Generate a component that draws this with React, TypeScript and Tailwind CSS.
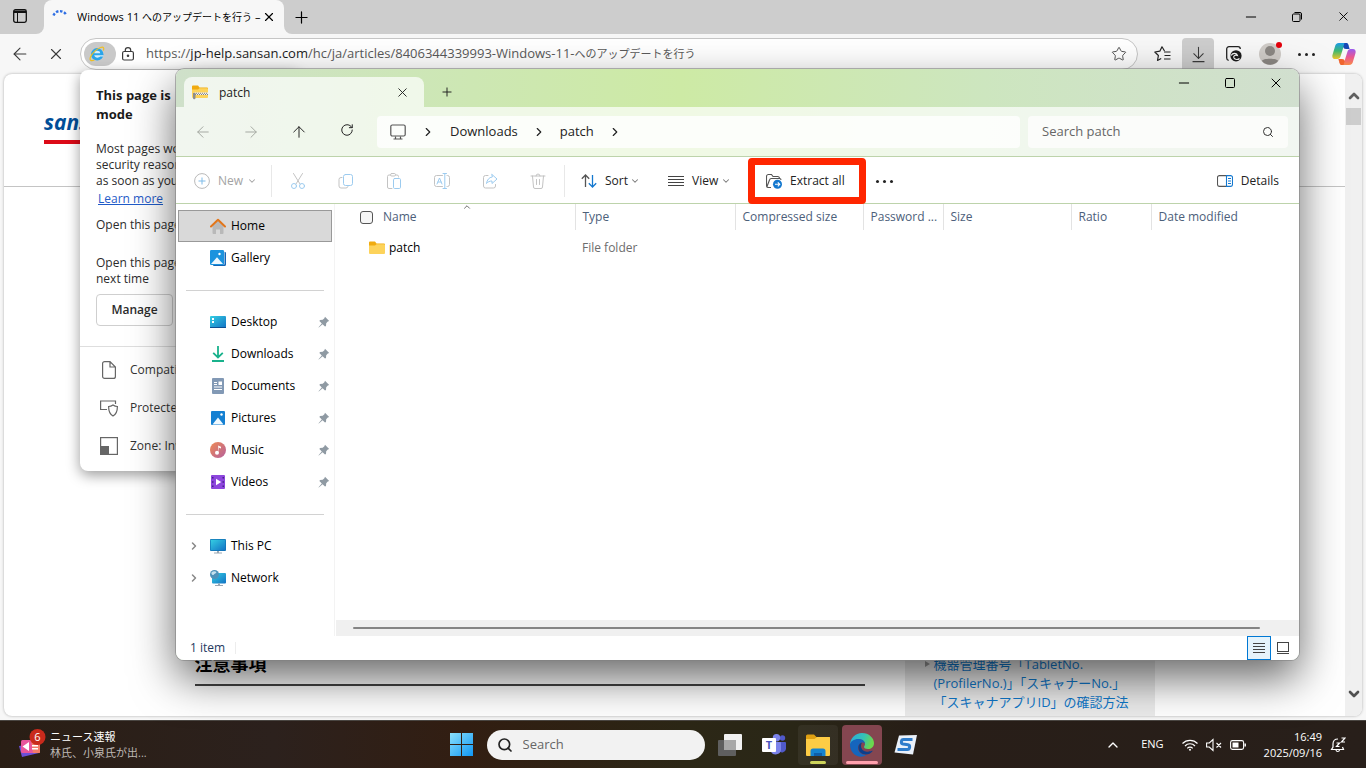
import type { ReactNode } from "react";
import {
  ArrowDownToLine,
  ArrowLeft,
  ArrowRight,
  ArrowUp,
  ChevronDown,
  ChevronRight,
  ChevronUp,
  Minus,
  Plus,
  RotateCw,
  Search,
  Square,
  Star,
  X,
} from "lucide-react";

const ICON = "h-4 w-4 shrink-0";

/* ---------- Explorer sidebar icons ---------- */

function HomeIcon() {
  return (
    <svg viewBox="0 0 16 16" className={ICON}>
      <path d="M2.5 7.5 8 2.5l5.5 5V15a1 1 0 0 1-1 1H10v-4.5H6V16H3.500a1 1 0 0 1-1-1z" fill="#b9b9b9" />
      <path d="m1 8.500 7-6.700 7 6.700" fill="none" stroke="#e2761b" strokeWidth="2" strokeLinecap="round" strokeLinejoin="round" />
    </svg>
  );
}

function GalleryIcon() {
  return (
    <svg viewBox="0 0 16 16" className={ICON}>
      <path d="M3 14.500h11.500V2H15a1 1 0 0 1 1 1v11.500a1.500 1.500 0 0 1-1.500 1.500H4a1 1 0 0 1-1-1z" fill="#1364b5" />
      <rect width="14" height="15" rx="1.2" fill="#1b93de" />
      <path d="M1 14 7 7.200 13 14z" fill="#eef8ff" />
      <circle cx="9.500" cy="4" r="1.200" fill="#fff" />
    </svg>
  );
}

function DesktopIcon() {
  return (
    <svg viewBox="0 0 16 16" className={ICON}>
      <defs>
        <linearGradient id="desk" x1="0" y1="0" x2="1" y2="1">
          <stop stopColor="#35cfe3" />
          <stop offset="1" stopColor="#1272c4" />
        </linearGradient>
      </defs>
      <rect y="2" width="16" height="12" rx="1" fill="url(#desk)" />
      <path d="M2 4h2v2H2zM2 7h2v2H2z" fill="#fff" />
      <path d="M0 13h16v.500a.5.500 0 0 1-.5.500H.500a.5.500 0 0 1-.5-.500z" fill="#0d4f91" />
    </svg>
  );
}

function DownloadsIcon() {
  return (
    <svg viewBox="0 0 16 16" className={ICON} fill="none" stroke="#19b28c" strokeWidth="1.800">
      <path d="M8 0v11M3.200 6.800 8 11.500l4.800-4.700M2 15h12" />
    </svg>
  );
}

function DocumentsIcon() {
  return (
    <svg viewBox="0 0 16 16" className={ICON}>
      <rect x="2" width="12" height="16" rx="1" fill="#8299b5" />
      <path d="M4 4h3v1H4zM4 6h3v1H4zM4 8.500h8v1H4zM4 11h8v1H4zM8.500 3.500H12V7H8.500z" fill="#fff" />
    </svg>
  );
}

function PicturesIcon() {
  return (
    <svg viewBox="0 0 16 16" className={ICON}>
      <rect x="1" y="1" width="14" height="14" rx="1" fill="#1580d2" />
      <path d="m2.500 14.500 5.500-7 5.500 7z" fill="#f2faff" />
      <circle cx="11.500" cy="4.500" r="1.200" fill="#fff" />
    </svg>
  );
}

function MusicIcon() {
  return (
    <svg viewBox="0 0 16 16" className={ICON}>
      <defs>
        <linearGradient id="music" x1="0" y1="0" x2="1" y2="1">
          <stop stopColor="#ef8a54" />
          <stop offset="1" stopColor="#b5609c" />
        </linearGradient>
      </defs>
      <circle cx="8" cy="8" r="8" fill="url(#music)" />
      <path d="M8 3.500 11 4.800V6.500L9 5.700v4.800" fill="#fff" />
      <circle cx="7" cy="10.700" r="2" fill="#fff" />
    </svg>
  );
}

function VideosIcon() {
  return (
    <svg viewBox="0 0 16 16" className={ICON}>
      <rect x="1" y="1" width="14" height="14" rx="1" fill="#8d46dd" />
      <path d="M2 3h1.500v1.500H2zM2 7.300h1.500v1.500H2zM2 11.500h1.500V13H2zM12.500 3H14v1.500h-1.500zM12.500 7.300H14v1.500h-1.500zM12.500 11.500H14V13h-1.500z" fill="#45208a" />
      <path d="m6 4.800 5.200 3.200L6 11.200z" fill="#fff" />
    </svg>
  );
}

function ThisPcIcon() {
  return (
    <svg viewBox="0 0 16 16" className={ICON}>
      <rect y="1" width="16" height="12" rx="1" fill="#1272b4" />
      <rect x=".7" y="1.700" width="14.600" height="10.600" rx=".5" fill="url(#desk)" />
      <path d="M7 13h2v1.500h3v1H4v-1h3z" fill="#9aa7b3" />
    </svg>
  );
}

function NetworkIcon() {
  return (
    <svg viewBox="0 0 16 16" className={ICON}>
      <rect x="2" y="3" width="14" height="10.500" rx="1" fill="url(#desk)" />
      <path d="M8 13.500h2V15h3v1H5v-1h3z" fill="#9aa7b3" />
      <circle cx="4.500" cy="4.500" r="4.500" fill="#4e92b9" />
      <path d="M1.500 2.500C3 1 5.500 1 6.500 2.200 5.500 4 4 3.500 3.500 5 2.500 5 1 4.500 1.500 2.500z" fill="#c6e2ee" />
    </svg>
  );
}

function FolderIcon({ zipped = false }: { zipped?: boolean }) {
  return (
    <svg viewBox="0 0 16 16" className={ICON}>
      <path d="M0 2.500A1 1 0 0 1 1 1.500h5l1.500 2H15a1 1 0 0 1 1 1V6H0z" fill="#f0ab10" />
      <path d="M0 5.500h6l1.500-1.300H15a1 1 0 0 1 1 1V13a1 1 0 0 1-1 1H1a1 1 0 0 1-1-1z" fill="#fdd35b" />
      {zipped && (
        <>
          <path d="M2 9.800h14" stroke="#eee" strokeWidth="2.500" />
          <path d="M2 9.300h14M3 10.500h13" stroke="#85827b" strokeWidth="1" strokeDasharray="1 1" />
          <path d="M1 9h2.500v5a1.200 1.200 0 0 1-2.500 0z" fill="#8d8d8d" />
        </>
      )}
    </svg>
  );
}

function PinIcon() {
  return (
    <svg viewBox="0 0 12 12" className="h-3 w-3 shrink-0">
      <path d="M7 .8 11.200 5l-1.400.6-1.600 1.700-.2 2.700-1 .6L4.600 8.200.8 11.500l-.3-.3L3.800 7.400 1.400 5l.6-1 2.700-.2L6.400 2.200z" fill="#8f9aa3" />
    </svg>
  );
}

/* ---------- Command bar icons ---------- */

function CommandIcon({ children }: { children: ReactNode }) {
  return (
    <svg viewBox="0 0 16 16" className={ICON} fill="none" stroke="#c3c3c3" strokeLinecap="round" strokeLinejoin="round">
      {children}
    </svg>
  );
}

const disabledCommands = [
  {
    label: "Cut",
    icon: (
      <>
        <path d="M3.500.5 10 11M12.500.5 6 11" />
        <circle cx="4" cy="13" r="2.500" stroke="#9ccbef" />
        <circle cx="12" cy="13" r="2.500" stroke="#9ccbef" />
      </>
    ),
  },
  {
    label: "Copy",
    icon: (
      <>
        <path d="M4 4.500H3a2 2 0 0 0-2 2V13a2 2 0 0 0 2 2h5a2 2 0 0 0 2-1.500" />
        <rect x="5.500" y="1.500" width="9" height="11" rx="2" stroke="#9ccbef" />
      </>
    ),
  },
  {
    label: "Paste",
    icon: (
      <>
        <path d="M4.500 2H3a1.500 1.500 0 0 0-1.500 1.500V14A1.500 1.500 0 0 0 3 15.500h3M9.500 2H11a1.500 1.500 0 0 1 1.500 1.500V4" />
        <rect x="4.500" y=".5" width="5" height="2.500" rx="1.200" />
        <rect x="7.500" y="5.500" width="7" height="10" rx="1.200" stroke="#9ccbef" />
      </>
    ),
  },
  {
    label: "Rename",
    icon: (
      <>
        <path d="M8.500 2.500H2.500a2 2 0 0 0-2 2v7a2 2 0 0 0 2 2h6M13 2.500h.5a2 2 0 0 1 2 2v7a2 2 0 0 1-2 2H13" />
        <path d="M10.800.5v15M9 .5h3.500M9 15.500h3.500M3 11l2.500-6L8 11M4 9h3" stroke="#9ccbef" />
      </>
    ),
  },
  {
    label: "Share",
    icon: (
      <>
        <path d="M6 2.500H3.500a2 2 0 0 0-2 2V13a2 2 0 0 0 2 2h8a2 2 0 0 0 2-2v-1.500" />
        <path d="M10 1.500 15 6l-5 4.500V8C7.500 8 6 8.800 4.500 10.500 5 7 7 4.300 10 4z" stroke="#9ccbef" />
      </>
    ),
  },
  {
    label: "Delete",
    icon: <path d="M1 3h14M6 3a2 2 0 0 1 4 0M2.500 3l1 11a1.500 1.500 0 0 0 1.500 1.500h6a1.500 1.500 0 0 0 1.500-1.500l1-11M6.500 6.500v5M9.500 6.500v5" />,
  },
];

const quickLinks = [
  { label: "Desktop", icon: <DesktopIcon /> },
  { label: "Downloads", icon: <DownloadsIcon /> },
  { label: "Documents", icon: <DocumentsIcon /> },
  { label: "Pictures", icon: <PicturesIcon /> },
  { label: "Music", icon: <MusicIcon /> },
  { label: "Videos", icon: <VideosIcon /> },
];

const columns = ["Type", "Compressed size", "Password ...", "Size", "Ratio", "Date modified"];

/* ---------- Browser ---------- */

function IeIcon() {
  return (
    <svg viewBox="0 0 16 16" className="h-4 w-4">
      <circle cx="8.200" cy="8.300" r="6.200" fill="#2aa5ea" />
      <path d="M5.200 7.200C5.600 4 11 4 11.200 7.200z" fill="#d5eefb" />
      <path d="M5.200 9.300h9.200l-.3 1.300h-3c-1.500 1.800-5.300 1.500-5.900-1.300z" fill="#d5eefb" />
      <path d="M14.300 4.500c1-2.500.2-4.200-2.700-3C8 2.700 3.300 7 1.600 10.800.2 14 1.800 15.700 5.400 14" fill="none" stroke="#f0c022" strokeWidth="1.200" />
    </svg>
  );
}

function TabActionsIcon() {
  return (
    <svg viewBox="0 0 14 14" className="h-[14px] w-[14px]">
      <rect x=".7" y=".7" width="12.600" height="12.600" rx="1.800" fill="none" stroke="#111" strokeWidth="1.300" />
      <path d="M1 1.500h12V4H1zM4 4h1v9H4z" fill="#111" />
    </svg>
  );
}

function TabStrip() {
  return (
    <div className="flex h-[34px] text-black">
      <div className="w-11 rounded-br-lg bg-[#cdcdcd]">
        <button aria-label="Tab actions" className="flex h-8 w-10 items-center justify-center">
          <TabActionsIcon />
        </button>
      </div>
      <div className="w-60 bg-[#cdcdcd]">
        <div className="flex h-[34px] items-center rounded-t-lg bg-[#f7f7f7] pr-2 pl-2">
          <svg viewBox="0 0 16 16" className={ICON}>
            <path d="M1.500 6.500A7 7 0 0 1 14.500 6.500" fill="none" stroke="#2f6fe4" strokeWidth="2.400" strokeDasharray="2.500 1.600" />
          </svg>
          <span className="ml-[9px] flex-1 overflow-hidden text-[11px] whitespace-nowrap">
            Windows 11 <span className="text-[10px]">へのアップデートを行う</span> –
          </span>
          <button aria-label="Close tab">
            <X className="h-[14px] w-[14px]" strokeWidth={2} />
          </button>
        </div>
      </div>
      <div className="flex flex-1 items-center justify-between rounded-bl-lg bg-[#cdcdcd]">
        <button aria-label="New tab" className="ml-2">
          <Plus className="h-[19px] w-[19px]" strokeWidth={1.5} />
        </button>
        <div className="flex">
          <button aria-label="Minimize browser" className="flex w-[46px] justify-center">
            <Minus className="h-4 w-4" strokeWidth={1.5} />
          </button>
          <button aria-label="Restore browser" className="flex w-[46px] items-center justify-center">
            <svg viewBox="0 0 10 10" className="h-[10px] w-[10px]" fill="none" stroke="#000">
              <rect x=".5" y="2" width="7.500" height="7.500" rx="1" />
              <path d="M2.500.5H8A1.500 1.500 0 0 1 9.500 2v5.500" />
            </svg>
          </button>
          <button aria-label="Close browser" className="flex w-[46px] justify-center">
            <X className="h-[15px] w-[15px]" strokeWidth={1.500} />
          </button>
        </div>
      </div>
    </div>
  );
}

function CopilotIcon() {
  return (
    <svg viewBox="0 0 24 22" className="h-[22px] w-6">
      <defs>
        <linearGradient id="cpA" x1="0" y1="0" x2="0" y2="1">
          <stop stopColor="#1b9ae8" />
          <stop offset=".5" stopColor="#3fb86f" />
          <stop offset="1" stopColor="#f0c52a" />
        </linearGradient>
        <linearGradient id="cpB" x1="0" y1="0" x2="0" y2="1">
          <stop stopColor="#9a5cf0" />
          <stop offset=".5" stopColor="#ea5791" />
          <stop offset="1" stopColor="#f88a48" />
        </linearGradient>
      </defs>
      <path d="M16 1.500C15.500.5 14.800 0 13.500 0H7C4.500 0 3.500 1.500 3 3.500L.6 11.500C-.2 14 .8 16 3 16h2.500c1.500 0 2.500-1 3-2.500l2.500-8C11.500 4 12.500 3 14 3h2.500z" fill="url(#cpA)" />
      <path d="M12.500 0h1.700c1.200 0 1.800.6 2.200 1.800L17.600 6H14c-1.700 0-2.600-.8-2.500-2.500z" fill="#1747b5" />
      <path d="M8 20.500c.5 1 1.200 1.500 2.500 1.500H17c2.500 0 3.500-1.500 4-3.500l2.400-8C24.200 8 23.200 6 21 6h-2.500c-1.500 0-2.500 1-3 2.500l-2.500 8C12.500 18 11.500 19 10 19H7.500z" fill="url(#cpB)" />
      <path d="M11.500 22H9.800c-1.200 0-1.800-.6-2.200-1.800L6.400 16H10c1.700 0 2.600.8 2.500 2.500z" fill="#f0652f" />
    </svg>
  );
}

function BrowserToolbar() {
  return (
    <div className="flex h-10 items-center text-[#3a3a3a]">
      <button aria-label="Back" className="ml-2.5 flex w-5 justify-center">
        <ArrowLeft className="h-5 w-5 shrink-0" strokeWidth={1.300} />
      </button>
      <button aria-label="Stop" className="ml-4 flex w-5 justify-center">
        <X className="h-[18px] w-[18px] shrink-0" strokeWidth={1.500} />
      </button>
      <div className="ml-[14px] flex h-8 flex-1 items-center rounded-full border border-[#c6c6c6] bg-white">
        <button aria-label="Internet Explorer mode" className="ml-[3px] flex h-6 w-8 items-center rounded-full bg-[#c9c9c9] pl-[5px]">
          <IeIcon />
        </button>
        <svg viewBox="0 0 12 14" className="ml-1.5 h-[14px] w-3" fill="none" stroke="#3a3a3a" strokeWidth="1.200">
          <rect x=".6" y="4.500" width="10.800" height="8.500" rx="1.500" />
          <path d="M3.300 4.500V3.300a2.700 2.700 0 0 1 5.400 0v1.200" />
          <circle cx="6" cy="8.800" r=".7" fill="#3a3a3a" />
        </svg>
        <div aria-label="Address" className="ml-3 flex-1 overflow-hidden text-[13px] whitespace-nowrap">
          <span className="text-[#5a5a5a]">https://</span>
          <span className="text-[#1b1b1b]">jp-help.sansan.com</span>
          <span className="text-[#5a5a5a]">
            /hc/ja/articles/8406344339993-Windows-11-<span className="text-[11px]">へのアップデートを行う</span>
          </span>
        </div>
        <Star className="mr-2.5 h-4 w-4 text-[#555]" strokeWidth={1.500} />
      </div>
      <div className="mr-[10px] ml-4 flex items-center">
        <button aria-label="Favorites" className="flex w-4 justify-center">
          <svg viewBox="0 0 17 16" className="h-4 w-[17px] shrink-0" fill="none" stroke="#222" strokeWidth="1.200" strokeLinejoin="round">
            <path d="M10.500 5 8 .8 5.800 5.200.8 6l3.600 3.500-.9 5 3.700-2M10 6h6.500M10.500 9.500h6M10 13h6.500" />
          </svg>
        </button>
        <button aria-label="Downloads" className="ml-3 flex h-8 w-8 items-center justify-center rounded-t bg-[#cdcdcd]">
          <ArrowDownToLine className="h-[19px] w-[19px]" strokeWidth={1.300} />
        </button>
        <button aria-label="Browser essentials" className="ml-3 flex w-4 justify-center">
          <svg viewBox="0 0 16 16" className="h-4 w-4" fill="none">
            <path d="M.7 12V3A2.300 2.300 0 0 1 3 .7h9A2.300 2.300 0 0 1 14.300 3M.7 12a2.300 2.300 0 0 0 2 2.300" stroke="#222" strokeWidth="1.300" />
            <circle cx="10" cy="9.800" r="5.600" fill="#1c1c1c" />
            <path d="M5 9.500c2-3 6-2.500 6.500 0-2.500-1-4.500.5-3.500 2.500 1 1.800 4 2 5.500.5" stroke="#f7f7f7" strokeWidth="1.200" />
          </svg>
        </button>
        <button aria-label="Profile" className="relative ml-4 h-6 w-6">
          <svg viewBox="0 0 24 24" className="h-6 w-6">
            <circle cx="12" cy="12" r="11" fill="#cfcbc7" />
            <circle cx="12" cy="9" r="5" fill="#8b8783" />
            <path d="M4 19c0-3 16-3 16 0-4 5-12 5-16 0z" fill="#8b8783" />
          </svg>
          <span className="absolute top-0 right-0 h-1.5 w-1.5 rounded-full bg-[#e3000b]" />
        </button>
        <button aria-label="Settings and more" className="ml-4 flex gap-1">
          <span className="h-[3px] w-[3px] rounded-full bg-[#222]" />
          <span className="h-[3px] w-[3px] rounded-full bg-[#222]" />
          <span className="h-[3px] w-[3px] rounded-full bg-[#222]" />
        </button>
        <button aria-label="Copilot" className="ml-[17px]">
          <CopilotIcon />
        </button>
      </div>
    </div>
  );
}

function WebPage() {
  return (
    <div className="mr-1 mb-1 ml-1 flex min-h-0 flex-1 overflow-hidden rounded-lg bg-white shadow-[0_0_3px_rgba(0,0,0,0.3)]">
      <main className="flex min-w-0 flex-1 flex-col">
        <header className="flex h-[113px] items-center border-b border-[#c4c4c4] px-10">
          <a href="#" className="-mt-2 w-[84px] border-b-4 border-[#dc0a17] pb-1 text-[21px] leading-7 font-bold text-[#004e98] italic">
            sans
          </a>
        </header>
        <div className="mx-auto flex w-full max-w-[960px] flex-1 justify-between">
          <section className="flex w-[670px] flex-col justify-end pb-[30px]">
            <h2 className="border-b-2 border-[#444] pb-2 text-lg leading-6 font-bold text-black">注意事項</h2>
          </section>
          <aside className="flex w-[250px] flex-col justify-end bg-[#ebebeb] px-5 pb-1">
            <a href="#" className="flex gap-1 text-[13px] leading-[19px] whitespace-nowrap text-[#0f77c9]">
              <span className="mt-1.5 h-0 w-0 shrink-0 border-y-[3px] border-l-[5px] border-y-transparent border-l-[#999]" />
              <span>
                機器管理番号「TabletNo.
                <br />
                (ProfilerNo.)」「スキャナーNo.」
                <br />
                「スキャナアプリID」の確認方法
              </span>
            </a>
          </aside>
        </div>
      </main>
      <div className="flex w-[17px] flex-col items-center bg-[#f0f0f0] py-[14px]">
        <ChevronUp className="h-4 w-4 text-[#606060]" strokeWidth={4} />
        <div className="mt-1 h-[17px] w-[15px] bg-[#cdcdcd]" />
        <ChevronDown className="mt-auto h-4 w-4 text-[#505050]" strokeWidth={4} />
      </div>
    </div>
  );
}

function IeModePopup() {
  return (
    <div className="absolute top-[70px] left-20 w-[220px] rounded-lg bg-white text-xs leading-4 whitespace-nowrap text-[#2b2b2b] shadow-[0_4px_14px_rgba(0,0,0,0.4)]">
      <div className="px-4 pt-4">
        <h2 className="text-[13px] leading-[19px] font-bold text-[#1b1b1b]">
          This page is
          <br />
          mode
        </h2>
        <p className="mt-[17px]">
          Most pages wo
          <br />
          security reason
          <br />
          as soon as you'
        </p>
        <a href="#" className="ml-0.5 block leading-5 text-[#1f5bc8] underline">
          Learn more
        </a>
        <p className="mt-2">Open this page</p>
        <p className="mt-[22px]">
          Open this page
          <br />
          next time
        </p>
        <button className="mt-[7px] h-8 w-[77px] rounded border border-[#cfcfcf] font-semibold">Manage</button>
      </div>
      <ul className="mt-5 border-t border-[#dedede] pt-1 pb-1.5 text-[#333]">
        <li className="flex h-[38px] items-center gap-3 pl-5">
          <svg viewBox="0 0 18 18" className="h-[18px] w-[18px]" fill="none" stroke="#666" strokeWidth="1.200">
            <path d="M2.600 2.600A2 2 0 0 1 4.600.6H10l5.400 5.400v9.400a2 2 0 0 1-2 2H4.600a2 2 0 0 1-2-2zM10 .6V6h5.400" />
          </svg>
          Compati
        </li>
        <li className="flex h-[38px] items-center gap-3 pl-5">
          <svg viewBox="0 0 18 18" className="h-[18px] w-[18px]" fill="none" stroke="#666" strokeWidth="1.200">
            <path d="M15.500 5V2H.6v8.500H7M8.600 7.500c2 0 3.200-.6 4.400-1.500 1.200.9 2.400 1.500 4.400 1.500 0 4.500-.6 7.500-4.400 9.500-3.800-2-4.400-5-4.400-9.500z" />
          </svg>
          Protected
        </li>
        <li className="flex h-[38px] items-center gap-3 pl-5">
          <svg viewBox="0 0 18 18" className="h-[18px] w-[18px]">
            <rect x=".6" y=".6" width="16.800" height="16.800" fill="none" stroke="#666" strokeWidth="1.200" />
            <path d="M0 9h9v9H0z" fill="#666" />
          </svg>
          Zone: Inv
        </li>
      </ul>
    </div>
  );
}

/* ---------- File Explorer window ---------- */

function ExplorerTitleBar() {
  return (
    <div className="flex h-[38px] justify-between text-[#222]">
      <div className="flex items-end">
        <div className="ml-2 flex h-[30px] w-60 items-center rounded-t-lg bg-white/70 px-2">
          <FolderIcon zipped />
          <span className="ml-[11px] flex-1 pt-0.5 text-xs font-medium">patch</span>
          <button aria-label="Close patch tab" className="mr-1.5">
            <X className="h-[15px] w-[15px]" strokeWidth={1.500} />
          </button>
        </div>
        <button aria-label="New folder tab" className="mb-2 ml-4">
          <Plus className="h-[14px] w-[14px]" strokeWidth={1.700} />
        </button>
      </div>
      <div className="flex h-7 items-center text-black">
        <button aria-label="Minimize" className="flex w-[46px] justify-center">
          <Minus className="h-4 w-4" strokeWidth={1.500} />
        </button>
        <button aria-label="Maximize" className="flex w-[46px] justify-center">
          <Square className="h-3 w-3" strokeWidth={2} />
        </button>
        <button aria-label="Close" className="flex w-[46px] justify-center">
          <X className="h-4 w-4" strokeWidth={1.500} />
        </button>
      </div>
    </div>
  );
}

function ExplorerNav() {
  return (
    <div className="flex h-[50px] items-center border-b border-[#bdd3ab] bg-white/70 text-[#222]">
      <div className="flex w-[201px] pl-[3px]">
        <button aria-label="Go back" className="flex w-12 justify-center text-[#a3a8a0]">
          <ArrowLeft className="h-[18px] w-[18px]" strokeWidth={1.300} />
        </button>
        <button aria-label="Go forward" className="flex w-12 justify-center text-[#a3a8a0]">
          <ArrowRight className="h-[18px] w-[18px]" strokeWidth={1.300} />
        </button>
        <button aria-label="Up" className="flex w-12 justify-center">
          <ArrowUp className="h-[18px] w-[18px]" strokeWidth={1.300} />
        </button>
        <button aria-label="Refresh" className="flex w-12 justify-center">
          <RotateCw className="h-[14px] w-[14px]" strokeWidth={1.700} />
        </button>
      </div>
      <nav aria-label="Path" className="flex h-8 flex-1 items-center rounded bg-white/80 pl-[13px] text-[13px]">
        <svg viewBox="0 0 16 16" className={ICON} fill="none" stroke="#555" strokeWidth="1.200">
          <rect x=".8" y="1" width="14.400" height="11" rx="1.500" />
          <path d="M5.500 12.500v2.200M10.500 12.500v2.200M3.500 15h9" />
        </svg>
        <ChevronRight className="ml-[15px] h-[14px] w-[14px]" strokeWidth={2} />
        <button className="ml-[15px]">Downloads</button>
        <ChevronRight className="ml-3.5 h-[14px] w-[14px]" strokeWidth={2} />
        <button className="ml-3.5">patch</button>
        <ChevronRight className="ml-3.5 h-[14px] w-[14px]" strokeWidth={2} />
      </nav>
      <label className="mr-[11px] ml-2 flex h-8 w-[260px] items-center rounded bg-[#fbfcfa] px-3.5 text-[13px]">
        <input type="text" aria-label="Search patch" placeholder="Search patch" className="min-w-0 flex-1 outline-none placeholder:text-[#666]" />
        <Search className="h-3 w-3 text-[#333]" strokeWidth={2} />
      </label>
    </div>
  );
}

function CommandBar() {
  return (
    <div className="flex h-[47px] items-center border-b border-[#bdd3ab] bg-white pt-0.5 text-xs text-[#222]">
      <button disabled className="ml-[18px] flex w-[77px] items-center text-[#a3a3a3]">
        <svg viewBox="0 0 16 16" className={ICON} fill="none" stroke="#b9b9b9">
          <circle cx="8" cy="8" r="7.400" />
          <path d="M8 4.500v7M4.500 8h7" stroke="#7fbbe8" />
        </svg>
        <span className="ml-2">New</span>
        <ChevronDown className="ml-1 h-2.5 w-2.5" strokeWidth={2.500} />
      </button>
      <div className="mr-0.5 h-8 w-px bg-[#e8e8e8]" />
      {disabledCommands.map((c) => (
        <button key={c.label} disabled aria-label={c.label} className="flex w-12 justify-center">
          <CommandIcon>{c.icon}</CommandIcon>
        </button>
      ))}
      <div className="ml-0.5 h-8 w-px bg-[#e8e8e8]" />
      <button className="ml-4 flex w-[59px] items-center">
        <svg viewBox="0 0 16 14" className="h-[14px] w-4 shrink-0" fill="none" strokeWidth="1.300">
          <path d="M4.500 13V1M.8 4.700 4.500 1l3.700 3.700" stroke="#555" />
          <path d="M11.500 1v12M7.800 9.300l3.700 3.700 3.700-3.700" stroke="#1478cf" />
        </svg>
        <span className="ml-2 flex-1 text-left">Sort</span>
        <ChevronDown className="h-2.5 w-2.5 text-[#777]" strokeWidth={2.500} />
      </button>
      <button className="ml-7 flex w-[63px] items-center">
        <span className="flex w-4 flex-col gap-[2px]">
          <span className="h-px bg-[#444]" />
          <span className="h-px bg-[#444]" />
          <span className="h-px bg-[#444]" />
          <span className="h-px bg-[#444]" />
        </span>
        <span className="ml-2 flex-1 text-left">View</span>
        <ChevronDown className="h-2.5 w-2.5 text-[#777]" strokeWidth={2.500} />
      </button>
      <div className="ml-[17px] h-[46px] w-[118px] rounded-sm border-[7px] border-[#ff2600]">
        <button className="flex h-full w-full items-center pl-[11px] whitespace-nowrap">
          <svg viewBox="0 0 16 16" className={ICON} fill="none">
            <path d="M5 14.500H2.500a2 2 0 0 1-2-2V3.500a2 2 0 0 1 2-2h3l1.500 2h4.500a2 2 0 0 1 2 2M1 13.500 3.500 7a2 2 0 0 1 1.800-1.500h8.200a1.500 1.500 0 0 1 1.500 1.500" stroke="#555" strokeWidth="1.100" />
            <circle cx="11.500" cy="11.300" r="4.500" fill="#1478cf" />
            <path d="M9 11.300h4.500M11.800 9.300l2 2-2 2" stroke="#fff" strokeWidth="1.100" />
          </svg>
          <span className="ml-2">Extract all</span>
        </button>
      </div>
      <button aria-label="See more" className="ml-2.5 flex gap-1">
        <span className="h-[3px] w-[3px] rounded-full bg-[#222]" />
        <span className="h-[3px] w-[3px] rounded-full bg-[#222]" />
        <span className="h-[3px] w-[3px] rounded-full bg-[#222]" />
      </button>
      <button className="mr-5 ml-auto flex items-center gap-2">
        <svg viewBox="0 0 16 12" className="h-3 w-4" fill="none">
          <path d="M9.500.6H2.500a2 2 0 0 0-2 2v6.800a2 2 0 0 0 2 2h7" stroke="#555" strokeWidth="1.100" />
          <path d="M9.500.6h4a2 2 0 0 1 2 2v6.800a2 2 0 0 1-2 2h-4zM11 3.500h3M11 6h3M11 8.500h3" stroke="#1478cf" strokeWidth="1.100" />
        </svg>
        Details
      </button>
    </div>
  );
}

type SideItemProps = {
  icon: ReactNode;
  label: string;
  pinned?: boolean;
  expandable?: boolean;
  active?: boolean;
};

function SideItem({ icon, label, pinned, expandable, active }: SideItemProps) {
  return (
    <a
      href="#"
      className={
        active
          ? "flex h-8 items-center border border-[#999] bg-[#d9d9d9] pl-[9px]"
          : "flex h-8 items-center pr-[2px] pl-2.5"
      }
    >
      <span className="flex w-[22px] shrink-0">
        {expandable && <ChevronRight className="h-3 w-3 text-[#888]" strokeWidth={3} />}
      </span>
      {icon}
      <span className="ml-[5px] flex-1">{label}</span>
      {pinned && <PinIcon />}
    </a>
  );
}

function Sidebar() {
  return (
    <nav aria-label="Folders" className="w-[159px] shrink-0 border-r border-[#f3f3f3] pt-1.5 pr-[2px] pl-[2px] text-xs text-black">
      <SideItem icon={<HomeIcon />} label="Home" active />
      <SideItem icon={<GalleryIcon />} label="Gallery" />
      <hr className="mx-2 mt-4 -mb-px h-0 border-[#d2d2d2]" />
      <div className="pt-4">
        {quickLinks.map((q) => (
          <SideItem key={q.label} icon={q.icon} label={q.label} pinned />
        ))}
      </div>
      <hr className="mx-2 mt-4 -mb-px h-0 border-[#d2d2d2]" />
      <div className="pt-4">
        <SideItem icon={<ThisPcIcon />} label="This PC" expandable />
        <SideItem icon={<NetworkIcon />} label="Network" expandable />
      </div>
    </nav>
  );
}

function FileTable() {
  return (
    <table className="w-full table-fixed text-left text-xs">
      <colgroup>
        <col className="w-60" />
        <col className="w-40" />
        <col className="w-32" />
        <col className="w-20" />
        <col className="w-32" />
        <col className="w-20" />
        <col />
      </colgroup>
      <thead>
        <tr className="h-[26px] text-[#4c607a]">
          <th className="relative border-r border-[#e3e3e3] p-0 pl-[25px] font-normal">
            <ChevronUp className="absolute -top-0.5 left-[127px] h-2.5 w-2.5 text-[#555]" strokeWidth={2} />
            <div className="flex items-center gap-2.5">
              <input type="checkbox" aria-label="Select all" className="h-[13px] w-[13px] appearance-none rounded-[3px] border border-[#555] bg-[#f6f6f6]" />
              Name
            </div>
          </th>
          {columns.map((c) => (
            <th key={c} className="border-r border-[#e3e3e3] p-0 pl-[7px] font-normal whitespace-nowrap last:border-r-0">
              {c}
            </th>
          ))}
        </tr>
      </thead>
      <tbody>
        <tr className="h-9">
          <td className="p-0 pl-[34px] text-black">
            <span className="flex items-center gap-1">
              <FolderIcon />
              patch
            </span>
          </td>
          <td className="p-0 pl-[7px] text-[#6d6d6d]">File folder</td>
        </tr>
      </tbody>
    </table>
  );
}

function ExplorerWindow() {
  return (
    <section
      aria-label="patch"
      className="absolute top-[69px] right-[67px] bottom-[108px] left-[176px] flex flex-col overflow-hidden rounded-lg bg-[linear-gradient(90deg,#cfe0ca_0%,#cde6b8_20%,#cdeaa5_45%,#cde6bf_72%,#d1dfcf_100%)] shadow-[0_0_0_1px_rgba(130,130,130,0.6),0_18px_44px_rgba(0,0,0,0.6)]"
    >
      <ExplorerTitleBar />
      <ExplorerNav />
      <CommandBar />
      <div className="flex min-h-0 flex-1 bg-white">
        <Sidebar />
        <div className="flex min-w-0 flex-1 flex-col">
          <FileTable />
          <div className="mt-auto ml-px flex h-4 items-center bg-[#f0f0f0] pr-[39px] pl-[17px]">
            <div className="h-0.5 flex-1 rounded bg-[#858585]" />
          </div>
        </div>
      </div>
      <footer className="flex h-6 items-center bg-white pl-3.5 text-xs text-[#1f3a5f]">
        <span>1 item</span>
        <span className="mr-auto ml-2.5 h-3 w-px bg-[#ededed]" />
        <button aria-label="Details view" className="flex h-6 w-6 flex-col items-center justify-center gap-[2px] border border-[#0078d4] bg-[#e5f3fb]">
          <span className="h-px w-3 bg-[#444]" />
          <span className="h-px w-3 bg-[#444]" />
          <span className="h-px w-3 bg-[#444]" />
          <span className="h-px w-3 bg-[#444]" />
        </button>
        <button aria-label="Large icons view" className="mr-2.5 ml-1.5 flex flex-col gap-px">
          <span className="h-2.5 w-3 border border-[#444]" />
          <span className="h-px w-3 bg-[#444]" />
        </button>
      </footer>
    </section>
  );
}

/* ---------- Taskbar ---------- */

function NewsIcon() {
  return (
    <svg viewBox="0 0 28 32" className="h-8 w-7 shrink-0">
      <path d="m1 17 17-3 3 10-17 4z" fill="#6b4fd8" />
      <rect x="3" y="11" width="19" height="13" rx="1.500" fill="#e8559c" />
      <path d="M13 11h9v13h-7z" fill="#f4845c" opacity=".8" />
      <path d="M4.500 17.500 11 13v9zM14 16h6v1.500h-6zM14 19h6v1.500h-6z" fill="#fff" />
      <circle cx="19.500" cy="8" r="8" fill="#c92a1c" />
      <text x="19.500" y="12" textAnchor="middle" fontSize="11" fill="#fff">
        6
      </text>
    </svg>
  );
}

function Taskbar() {
  return (
    <footer className="grid h-12 shrink-0 grid-cols-[1fr_auto_1fr] items-center border-t border-[#4a4642] bg-[linear-gradient(90deg,#2a1e15_0%,#2c211d_20%,#321e12_34%,#2c2716_50%,#2a2717_58%,#281e18_68%,#281f1a_100%)] text-white">
      <button className="ml-[18px] flex items-center gap-1 justify-self-start text-left text-[11px] leading-4">
        <NewsIcon />
        <span>
          <span className="block">ニュース速報</span>
          <span className="block text-[#bdb8b4]">林氏、小泉氏が出...</span>
        </span>
      </button>

      <div className="flex items-center">
        <button aria-label="Start" className="ml-px">
          <svg viewBox="0 0 23 23" className="h-[23px] w-[23px]">
            <defs>
              <linearGradient id="win" x1="0" y1="0" x2="1" y2="1">
                <stop stopColor="#8be0fb" />
                <stop offset="1" stopColor="#0f97f5" />
              </linearGradient>
            </defs>
            <path d="M0 0h11v11H0zM12 0h11v11H12zM0 12h11v11H0zM12 12h11v11H12z" fill="url(#win)" />
          </svg>
        </button>
        <label className="ml-[14px] flex h-[30px] w-[218px] items-center gap-2.5 rounded-full bg-[#f2f2f2] px-2.5 text-[13px]">
          <Search className="h-4 w-4 text-[#222]" strokeWidth={2.500} />
          <input type="text" aria-label="Search" placeholder="Search" className="min-w-0 flex-1 text-black outline-none placeholder:text-[#666]" />
        </label>
        <button aria-label="Task view" className="ml-[13px]">
          <svg viewBox="0 0 24 22" className="h-[22px] w-6">
            <rect x="6" width="18" height="16" rx="1" fill="#f1f1f1" />
            <rect y="6" width="18" height="16" rx="1" fill="#5f5f5f" />
            <path d="M6 6h12v10H6z" fill="#a8a8a8" />
          </svg>
        </button>
        <button aria-label="Teams" className="ml-5">
          <svg viewBox="0 0 24 22" className="h-[22px] w-6">
            <circle cx="20.500" cy="4" r="2.700" fill="#5059c9" />
            <path d="M17 8h6a1 1 0 0 1 1 1v6a4 4 0 0 1-7 2z" fill="#5059c9" />
            <circle cx="14.500" cy="3.700" r="3.700" fill="#7b83eb" />
            <path d="M9 8h9a1 1 0 0 1 1 1v7a5.500 5.500 0 0 1-10 2z" fill="#7b83eb" />
            <rect y="4" width="14" height="14" rx="1" fill="#fff" />
            <text x="7" y="15" textAnchor="middle" fontSize="11" fontWeight="700" fill="#4b53bc">
              T
            </text>
          </svg>
        </button>
        <button aria-label="File Explorer" className="ml-3 flex h-10 w-10 flex-col items-center justify-end rounded bg-white/5 pb-px">
          <svg viewBox="0 0 24 22" className="mb-[5px] h-[22px] w-6">
            <path d="M0 2A1.500 1.500 0 0 1 1.500.5H8L10.500 3H24v4H0z" fill="#dfa012" />
            <path d="M0 5h8.500L11 3h12a1 1 0 0 1 1 1v17a1 1 0 0 1-1 1H1a1 1 0 0 1-1-1z" fill="#fdcc45" />
            <path d="M4.500 17a2.500 2.500 0 0 1 2.500-2.500h10a2.500 2.500 0 0 1 2.500 2.500v5h-15z" fill="#1583cf" />
            <path d="M8 19h8v3H8z" fill="#0e5ea8" />
          </svg>
          <span className="h-[3px] w-4 rounded-full bg-[#cdd35a]" />
        </button>
        <button aria-label="Microsoft Edge" className="ml-1 flex h-10 w-10 flex-col items-center justify-end rounded bg-[#844650] pb-px">
          <svg viewBox="0 0 24 24" className="mb-1 h-6 w-6">
            <defs>
              <linearGradient id="edgeTop" x1="0" y1="0" x2="1" y2=".3">
                <stop stopColor="#2aa7df" />
                <stop offset=".6" stopColor="#35c4b5" />
                <stop offset="1" stopColor="#6bd84e" />
              </linearGradient>
            </defs>
            <path d="M0 12C0 5 5.500 0 12 0c7 0 12 5 12 10 0 4-3 6-6 6-2.500 0-4-1-4-2 0-.8 1-1.200 1-3 0-2.500-2.500-4.500-5.500-4.500C5 6.500 1 9 0 12z" fill="url(#edgeTop)" />
            <path d="M0 12c0-3.500 4-6 8.500-6 4 0 6.500 2.300 6.500 5-.5-1-1.500-1.500-2.500-1.500C10 9.500 8 12 8 15c0 4 3.500 7 8 7-1.200.9-3 1.700-5 1.700C5 23.700 0 18.500 0 12z" fill="#1565bd" />
            <path d="M8.500 13c-1 5 3 8.500 7.500 8.500 2.500 0 5-1.300 6.500-3.300.2-.3 0-.5-.3-.4-3 1.400-9.500 1.700-11-3.300C10.800 13 11 11 12 9.700 10.500 10 9 11 8.500 13z" fill="#0c3f8c" />
          </svg>
          <span className="h-[3px] w-8 rounded-full bg-[#ffa0ac]" />
        </button>
        <button aria-label="Scanner" className="ml-3">
          <svg viewBox="0 0 24 20" className="h-5 w-6">
            <path d="M5 .5 23 0l-4 19.500L.5 17.500z" fill="#eaf1fa" />
            <path d="M18.500 4.500H9.500C7 4.500 6.500 8.500 9 9l5 .7c2.500.4 2 4.800-.7 4.800H3.500" fill="none" stroke="#2d7ccb" strokeWidth="3" />
          </svg>
        </button>
      </div>

      <div className="mr-5 flex items-center justify-self-end text-[11px]">
        <ChevronUp className="h-4 w-4" strokeWidth={2} />
        <span className="ml-5">ENG</span>
        <svg viewBox="0 0 16 12" className="ml-[18px] h-3 w-4" fill="none" stroke="#fff" strokeWidth="1.200">
          <path d="M.5 4.500C4.500.3 11.500.3 15.500 4.500M3 7c2.700-3 7.300-3 10 0M5.300 9.300c1.500-1.700 3.900-1.700 5.400 0" />
          <circle cx="8" cy="10.800" r="1" fill="#fff" stroke="none" />
        </svg>
        <svg viewBox="0 0 16 14" className="ml-2 h-[14px] w-4" fill="none" stroke="#fff" strokeWidth="1.100">
          <path d="M.6 5v4h2.700L7 12.500v-11L3.300 5zM10.500 5l4.500 4.500M15 5l-4.500 4.500" />
        </svg>
        <svg viewBox="0 0 16 10" className="ml-2 h-2.5 w-4" fill="none" stroke="#fff" strokeWidth="1.100">
          <rect x=".6" y=".6" width="13" height="8.800" rx="1.800" />
          <path d="M2.500 2.500h6v5h-6z" fill="#fff" stroke="none" />
          <path d="M15.200 3.500v3" strokeWidth="1.500" />
        </svg>
        <span className="ml-[18px] text-right leading-4">
          16:49
          <br />
          2025/09/16
        </span>
        <svg viewBox="0 0 16 16" className="ml-2 h-4 w-4" fill="none" stroke="#fff" strokeWidth="1.200">
          <path d="M8 2C4.500 2 3 4.500 3 7v3l-1.500 2.500h12L12.500 10M6 13c.3 2 3.200 2 3.500 0M6.500 6h3L6.500 9.500h3M11.500 1H15l-3.500 4H15" />
        </svg>
      </div>
    </footer>
  );
}

export default function App() {
  return (
    <div className="relative flex h-screen min-h-[600px] flex-col overflow-hidden bg-[#f7f7f7] font-['Open_Sans','Noto_Sans_CJK_JP',sans-serif]">
      <TabStrip />
      <BrowserToolbar />
      <WebPage />
      <IeModePopup />
      <ExplorerWindow />
      <Taskbar />
    </div>
  );
}
